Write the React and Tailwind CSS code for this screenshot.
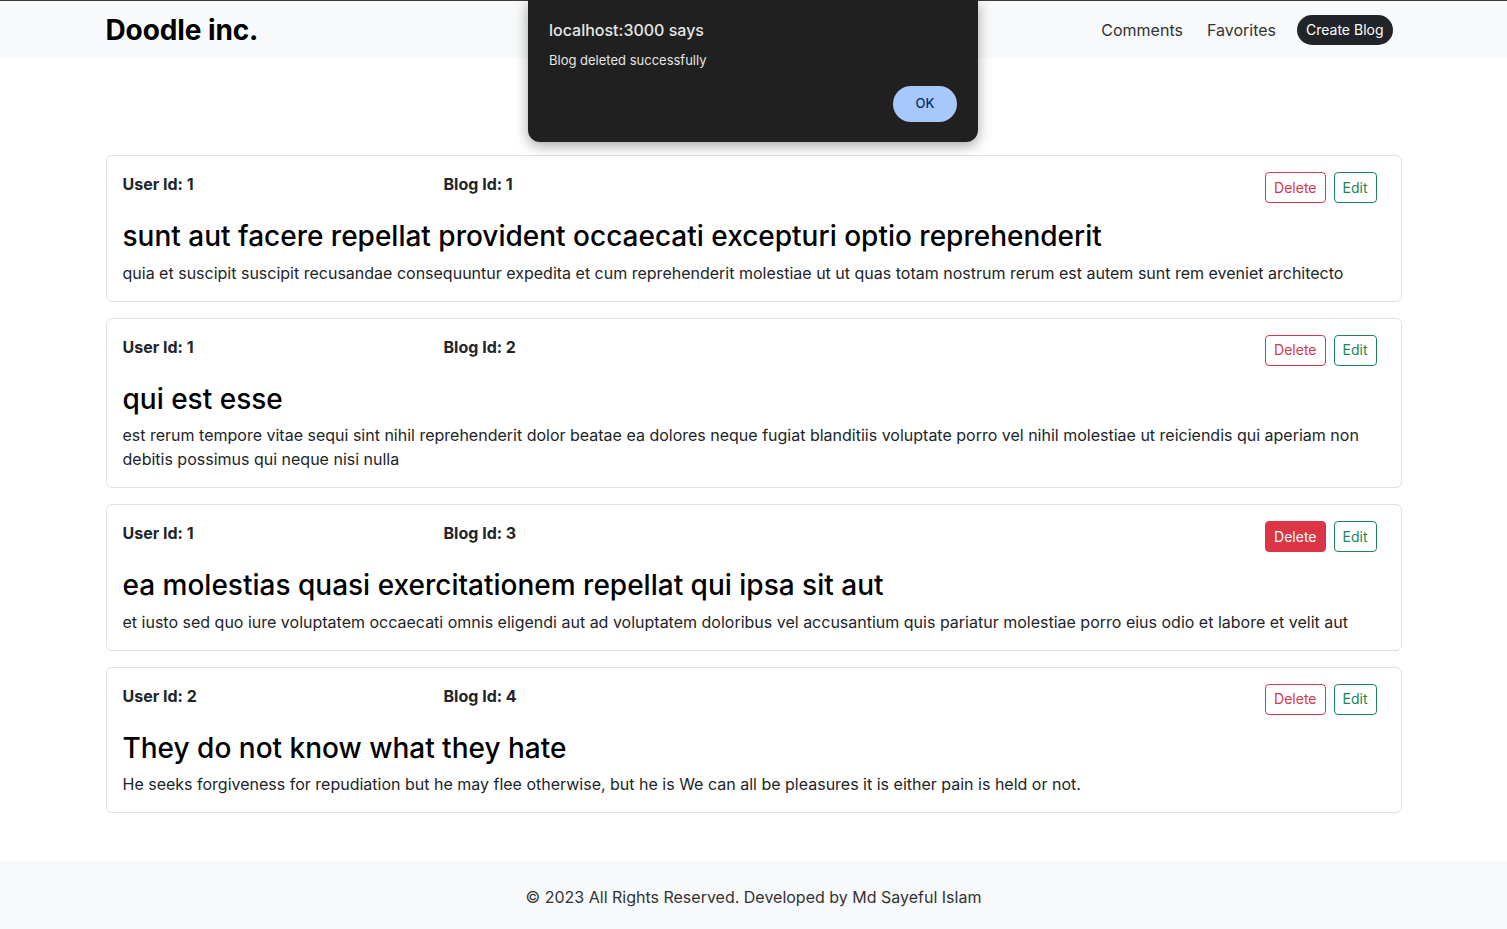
import React from "react";

const blogs = [
  {
    userId: 1,
    id: 1,
    title: "sunt aut facere repellat provident occaecati excepturi optio reprehenderit",
    body: "quia et suscipit suscipit recusandae consequuntur expedita et cum reprehenderit molestiae ut ut quas totam nostrum rerum est autem sunt rem eveniet architecto",
  },
  {
    userId: 1,
    id: 2,
    title: "qui est esse",
    body: "est rerum tempore vitae sequi sint nihil reprehenderit dolor beatae ea dolores neque fugiat blanditiis voluptate porro vel nihil molestiae ut reiciendis qui aperiam non debitis possimus qui neque nisi nulla",
  },
  {
    userId: 1,
    id: 3,
    title: "ea molestias quasi exercitationem repellat qui ipsa sit aut",
    body: "et iusto sed quo iure voluptatem occaecati omnis eligendi aut ad voluptatem doloribus vel accusantium quis pariatur molestiae porro eius odio et labore et velit aut",
    hover: true,
  },
  {
    userId: 2,
    id: 4,
    title: "They do not know what they hate",
    body: "He seeks forgiveness for repudiation but he may flee otherwise, but he is We can all be pleasures it is either pain is held or not.",
  },
];

function BlogCard({ blog }) {
  return (
    <div className="border border-[#dee2e6] rounded-md p-4 mb-4">
      <div className="flex items-start">
        <div className="w-[321px] font-bold leading-6 text-[#212529]">User Id: {blog.userId}</div>
        <div className="w-[321px] font-bold leading-6 text-[#212529]">Blog Id: {blog.id}</div>
        <div className="flex-1 flex justify-end gap-2 pr-2">
          <button
            className={
              blog.hover
                ? "h-[31px] px-2 text-sm rounded border border-[#dc3545] bg-[#dc3545] text-white"
                : "h-[31px] px-2 text-sm rounded border border-[#dc3545] text-[#dc3545]"
            }
          >
            Delete
          </button>
          <button className="h-[31px] px-2 text-sm rounded border border-[#198754] text-[#198754]">Edit</button>
        </div>
      </div>
      <h3 className="mt-[17px] mb-[7px] text-[28px] font-medium leading-[1.2] text-black">{blog.title}</h3>
      <p className="leading-6 text-[#212529]">{blog.body}</p>
    </div>
  );
}

export default function App() {
  return (
    <div className="relative min-h-screen bg-white font-['Inter','Liberation_Sans',sans-serif] text-[#212529]">
      {/* Navbar */}
      <nav className="bg-[#f8f9fa] border-t border-[#3c3c3c] h-[58px]">
        <div className="w-[1296px] mx-auto h-full flex items-center justify-between">
          <span className="text-[28px] font-bold tracking-[-0.1px] text-black">Doodle inc.</span>
          <div className="flex items-center text-base text-[#333]">
            <a className="mr-[24px]">Comments</a>
            <a className="mr-[21px]">Favorites</a>
            <button className="h-[30px] px-[9px] mr-[9px] rounded-full bg-[#212529] text-white text-sm">Create Blog</button>
          </div>
        </div>
      </nav>

      {/* Blogs */}
      <main className="w-[1296px] mx-auto pt-[97px] pb-8">
        {blogs.map((b) => (
          <BlogCard key={b.id} blog={b} />
        ))}
      </main>

      {/* Footer */}
      <footer className="bg-[#f8f9fa] pt-6 pb-6 text-center text-[#333] leading-6">
        © 2023 All Rights Reserved. Developed by Md Sayeful Islam
      </footer>

      {/* Alert dialog */}
      <div className="absolute top-0 left-[528px] w-[450px] h-[142px] bg-[#202020] rounded-b-xl shadow-[0_4px_14px_rgba(0,0,0,0.35)] px-[21px] pt-[20px]">
        <div className="text-[16px] font-medium text-[#e6e6e6] leading-5">localhost:3000 says</div>
        <div className="mt-[10px] text-[13px] text-[#e6e6e6] leading-5">Blog deleted successfully</div>
        <div className="flex justify-end mt-[16px]">
          <button className="w-[64px] h-[36px] rounded-full bg-[#a8c7fa] text-[#062e6f] text-[13px] font-medium">OK</button>
        </div>
      </div>
    </div>
  );
}
